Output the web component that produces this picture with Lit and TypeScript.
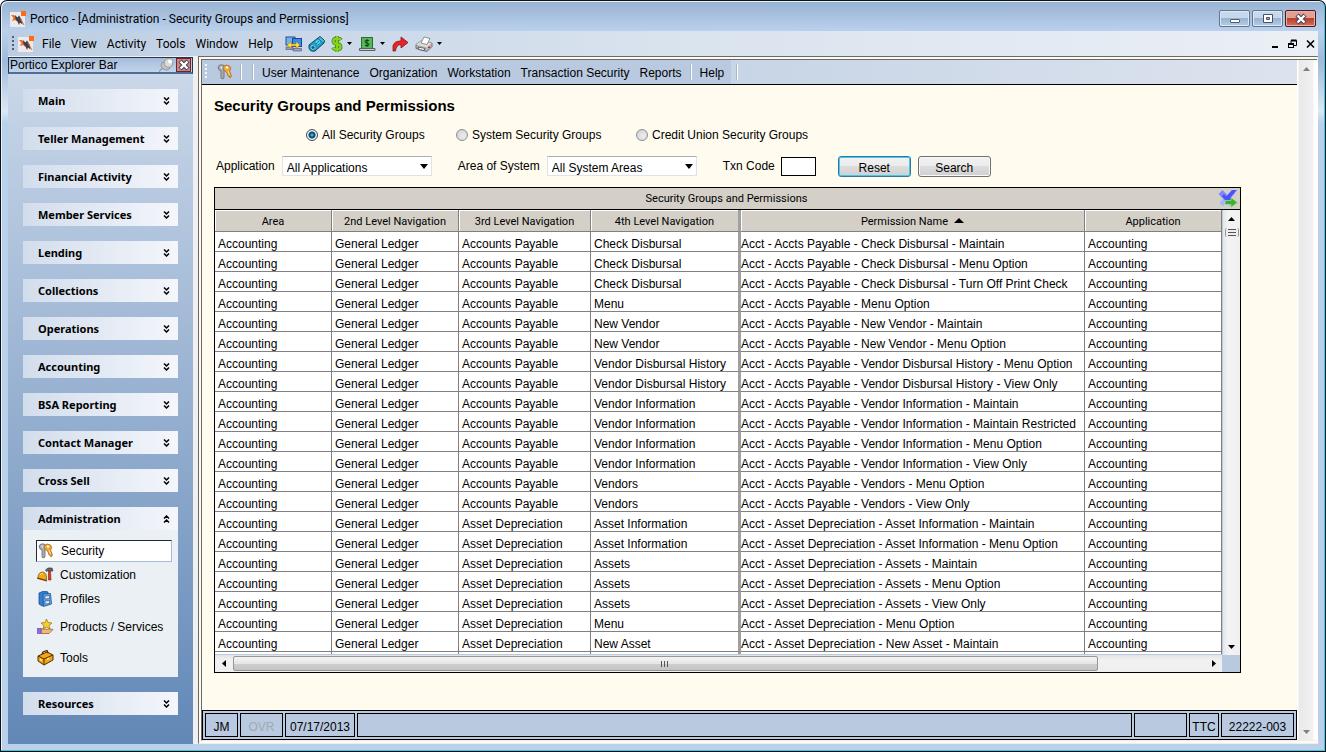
import { LitElement, html, css, svg, nothing } from "lit";
import { customElement, property, state } from "lit/decorators.js";
import { classMap } from "lit/directives/class-map.js";

const box = (w: number, h: number, body: unknown) =>
  html`<svg width=${w} height=${h} viewBox="0 0 ${w} ${h}" aria-hidden="true">${body}</svg>`;

const glyphs: Record<string, unknown> = {
  logo: box(16, 16, svg`
    <rect y="1" width="15" height="15" fill="#eceaec"/>
    <path d="M1 4L4 4L8 8L7.500 11L5 9L2 10L3.500 7Z" fill="#f26a21"/>
    <path d="M5 4L7.500 6.500L9 4.500L12 9L12.500 13.500L10 11.500L9 14L7.500 10.500L5.500 8Z" fill="#3c3f4c"/>
    <path d="M10 7L14 14" stroke="#f26a21"/>
    <rect x="11" y="0" width="5" height="5" fill="#ff6a13"/>`),
  keys: box(17, 16, svg`
    <path d="M1 3Q2 0 6 1L9 3L7 6L7 14L5 15L4 14V7L2 6Z" fill="#a9adb3" stroke="#666a70" stroke-width=".8"/>
    <circle cx="4.500" cy="3.500" r="1" fill="#eee"/>
    <path d="M6 3Q9 -0.500 12.500 2Q15 5 12.500 7L14.500 12L13 14L12 12L11 12L10.500 10L9.500 8Q6 7 6 3Z" fill="#f0a63a" stroke="#a8691c" stroke-width=".8"/>
    <path d="M11 7L12.500 11" stroke="#ffe0a0"/>
    <circle cx="10" cy="3.500" r="1.300" fill="#fff4d8"/>`),
  computers: box(17, 16, svg`
    <rect x="1" y="1" width="9" height="8" fill="#6eb4f5" stroke="#2e4a8c"/>
    <rect x="7.500" y="2.500" width="9" height="8" fill="#2e8ff0" stroke="#2e3f8c"/>
    <path d="M1 11h7v2.500H1zM8 12.500h8.500v2.500H8z" fill="#9a9ec0" stroke="#4a4f80" stroke-width=".6"/>
    <path d="M2 9L6 5.500V8H11V5.500L15 9L11 12.500V10H6V12.500Z" fill="#ffe03a" stroke="#9a7a10" stroke-width=".6"/>`),
  device: box(17, 16, svg`
    <path d="M1 9L10 2L16 7L7 15Q2 16 1 12Z" fill="#1d9cc4" stroke="#0a4a66"/>
    <path d="M10 2L12 0.500L16.500 4.500L16 7" fill="#3cc4e0" stroke="#0a4a66"/>
    <path d="M7 6L10 3.500L13.500 7L10.500 9.500Z" fill="#5fd3ea"/>
    <path d="M8 8L11 5M10 9L13 6.500" stroke="#0c5f86" stroke-width=".8"/>
    <circle cx="5" cy="11.500" r="2" fill="#0c5f86" stroke="#8fe0f0" stroke-width=".8"/>`),
  dollar: box(12, 16, svg`
    <path d="M10 4Q9 2.500 6 2.500Q2.500 2.500 2.500 5Q2.500 7.500 6 8Q9.500 8.500 9.500 11Q9.500 13.500 6 13.500Q3 13.500 2 11.500M6 0V16" fill="none" stroke="#3f7a10" stroke-width="3.800"/>
    <path d="M10 4Q9 2.500 6 2.500Q2.500 2.500 2.500 5Q2.500 7.500 6 8Q9.500 8.500 9.500 11Q9.500 13.500 6 13.500Q3 13.500 2 11.500M6 0V16" fill="none" stroke="#84d321" stroke-width="2.400"/>`),
  cash: box(17, 16, svg`
    <rect x="2.500" y="1.500" width="11" height="11" fill="#54b85a" stroke="#2c6e34"/>
    <path d="M10 4.500H7Q6 4.500 6 6Q6 7 8 7Q10 7 10 8.500Q10 9.500 9 9.500H6M8 3V11" fill="none" stroke="#0d3d14"/>
    <path d="M0.500 12.500H16V14.500H0.500Z" fill="#c9cdd0" stroke="#5a5f64"/>`),
  redo: box(17, 16, svg`<path d="M1 15V10Q2 5 9 5V1L16 6.500L9 12V8.500Q4 8.500 3.500 15Z" fill="#e8232a" stroke="#8a0f14" stroke-width=".8"/>`),
  printer: box(18, 16, svg`
    <path d="M1 8.500L6 5L17 7V10.500L12 15.500L1 12.500Z" fill="#b4b6b8" stroke="#55585a" stroke-width=".8"/>
    <path d="M1 8.500L6 5L17 7L12 11.500Z" fill="#d9dbdc"/>
    <path d="M6 7L9 1L15 2.500L12 8.500Z" fill="#fff" stroke="#777" stroke-width=".8"/>
    <path d="M3 11L10 12.500L9 14.500L4 13.500Z" fill="#fff" stroke="#333" stroke-width=".7"/>
    <rect x="13" y="10.500" width="2" height="1.500" fill="#e02020"/>`),
  drop: box(6, 3, svg`<path d="M0 0H5L2.500 3Z" fill="#000"/>`),
  pin: box(15, 14, svg`
    <path d="M5 9L0 13.500" stroke="#777"/>
    <path d="M2 6Q2 12 9 12L11 10L4 4Z" fill="#c4c4c4" stroke="#888" stroke-width=".8"/>
    <circle cx="9.500" cy="5" r="4.400" fill="#dadada" stroke="#8c8c8c" stroke-width=".8"/>
    <circle cx="11" cy="3.500" r="2" fill="#fff"/>`),
  down: box(7, 8, svg`<path d="M1 0.500L3.500 3L6 0.500M1 4.500L3.500 7L6 4.500" fill="none" stroke="#000" stroke-width="1.500"/>`),
  up: box(7, 8, svg`<path d="M1 3.500L3.500 1L6 3.500M1 7.500L3.500 5L6 7.500" fill="none" stroke="#000" stroke-width="1.500"/>`),
  customization: box(17, 16, svg`
    <path d="M1 11Q1 5 6 5Q10 6 9.500 13L4 12Z" fill="#f5a914" stroke="#8a5608" stroke-width=".8"/>
    <path d="M3 8Q4 6 6 6.500" fill="none" stroke="#ffe28a"/>
    <path d="M0 11L10 14" stroke="#6b4306" stroke-width="1.200"/>
    <path d="M8.500 3L11 1H15L16 4H14L13.500 3.500H11L9.500 4.500Z" fill="#667" stroke="#222" stroke-width=".6"/>
    <path d="M11.500 4H13.500L14 13H11.500Z" fill="#d5401f" stroke="#7a1e0c" stroke-width=".6"/>`),
  profiles: box(17, 16, svg`
    <path d="M2 2L7 0L11 1V13L5 15L2 13Z" fill="#2f7fd8" stroke="#174a90" stroke-width=".8"/>
    <path d="M6 3L13.500 2.500L14.500 13L6.500 15.500Z" fill="#5fa8ee" stroke="#1e4f94" stroke-width=".8"/>
    <path d="M8 5L12.500 4.500V7.500L8 8ZM8 10L12.500 9.500V12.500L8 13Z" fill="#d6e8fa" stroke="#235" stroke-width=".5"/>`),
  products: box(17, 16, svg`
    <path d="M9.500 0L11 3.500L15 4L12 6.500L13 10L9.500 8L6 10L7 6.500L4 4L8 3.500Z" fill="#f6cf2e" stroke="#94700c" stroke-width=".7"/>
    <path d="M4 10H8Q10 11 13 10L16 10.500L12 14.500H4Z" fill="#f3b877" stroke="#8a5420" stroke-width=".7"/>
    <rect x="0.500" y="9.500" width="3.500" height="5" fill="#8f6ee0" stroke="#5a3fb0" stroke-width=".6"/>`),
  tools: box(17, 16, svg`
    <path d="M1 6L10 2L16 5V10L7 15L1 11Z" fill="#f3a712" stroke="#4c2e02"/>
    <path d="M1 6L7 9L16 5M7 9V15" fill="none" stroke="#4c2e02"/>
    <path d="M5 4L6 2L10 0.500L11 3" fill="none" stroke="#4c2e02" stroke-width="1.300"/>
    <path d="M3 8.500L5 9.500V11L3 10ZM10 8.500L12 7.500V9L10 10Z" fill="#fff0a8"/>`),
  exportX: box(20, 19, svg`
    <path d="M3 15.500L15.500 3" stroke="#a9b2fb" stroke-width="5"/>
    <path d="M2.500 3L14 15" stroke="#7f89fb" stroke-width="5.500"/>
    <path d="M7 9L14 1H19L13 8L16 13L10 13Z" fill="#4a52ff"/>
    <path d="M5 6L11 13" stroke="#4a52ff" stroke-width="3"/>
    <path d="M7 11.500H13V8.500L19.500 13.500L13 18.500V15.500H7Z" fill="#36b52a" stroke="#b8dca8" stroke-width=".7"/>`),
  sort: box(10, 5, svg`<path d="M0 5L5 0L10 5Z" fill="#000"/>`),
  arrowUp: box(7, 4, svg`<path d="M0 4L3.500 0L7 4Z"/>`),
  arrowDown: box(7, 4, svg`<path d="M0 0L3.500 4L7 0Z"/>`),
  arrowLeft: box(4, 7, svg`<path d="M4 0L0 3.500L4 7Z"/>`),
  arrowRight: box(4, 7, svg`<path d="M0 0L4 3.500L0 7Z"/>`),
  combo: box(8, 5, svg`<path d="M0 0H8L4 5Z"/>`),
  wmin: box(12, 12, svg`<rect x="1.500" y="6.500" width="9" height="3" rx=".5" fill="#fff" stroke="#555c70"/>`),
  wmax: box(12, 12, svg`<path d="M1.500 1.500H10.500V9.500H1.500ZM4.500 4.500V6.500H7.500V4.500Z" fill="#fff" fill-rule="evenodd" stroke="#4a5066"/>`),
  wclose: box(12, 12, svg`<path d="M2 2L10 10M10 2L2 10" stroke="#4b4356" stroke-width="4.500"/><path d="M2.500 2.500L9.500 9.500M9.500 2.500L2.500 9.500" stroke="#fff" stroke-width="2.400"/>`),
  mmin: box(8, 10, svg`<rect x="1" y="7" width="6" height="2"/>`),
  mrestore: box(9, 10, svg`<path d="M3 4V1.500H8.500V6.500H6" fill="none" stroke="#000"/><path d="M3 1.500H8.500M0.500 5H6" stroke="#000" stroke-width="2"/><rect x=".5" y="4.500" width="5" height="4" fill="none" stroke="#000"/>`),
  mclose: box(9, 10, svg`<path d="M1 1.500L8 8.500M8 1.500L1 8.500" stroke="#000" stroke-width="1.600"/>`),
};

const V = "Vendor Information", D = "Vendor Disbursal History", P = "Accounts Payable", A = "Asset Depreciation";
const permissions: [string, string, string][] = [
  [P, "Check Disbursal", "Check Disbursal - Maintain"],
  [P, "Check Disbursal", "Check Disbursal - Menu Option"],
  [P, "Check Disbursal", "Check Disbursal - Turn Off Print Check"],
  [P, "Menu", "Menu Option"],
  [P, "New Vendor", "New Vendor - Maintain"],
  [P, "New Vendor", "New Vendor - Menu Option"],
  [P, D, "Vendor Disbursal History - Menu Option"],
  [P, D, "Vendor Disbursal History - View Only"],
  [P, V, "Vendor Information - Maintain"],
  [P, V, "Vendor Information - Maintain Restricted"],
  [P, V, "Vendor Information - Menu Option"],
  [P, V, "Vendor Information - View Only"],
  [P, "Vendors", "Vendors - Menu Option"],
  [P, "Vendors", "Vendors - View Only"],
  [A, "Asset Information", "Asset Information - Maintain"],
  [A, "Asset Information", "Asset Information - Menu Option"],
  [A, "Assets", "Assets - Maintain"],
  [A, "Assets", "Assets - Menu Option"],
  [A, "Assets", "Assets - View Only"],
  [A, "Menu", "Menu Option"],
  [A, "New Asset", "New Asset - Maintain"],
];

const common = css`
  :host, *, *::before, *::after { box-sizing: border-box; }
  svg { display: block; flex: none; }
  button {
    margin: 0; padding: 0; border: 0; background: none; font: inherit; color: inherit;
    display: flex; align-items: center; justify-content: center; white-space: nowrap;
  }
`;

@customElement("explorer-bar")
export class ExplorerBar extends LitElement {
  @state() private open = "Administration";
  private groups = ["Main", "Teller Management", "Financial Activity", "Member Services", "Lending", "Collections",
    "Operations", "Accounting", "BSA Reporting", "Contact Manager", "Cross Sell", "Administration", "Resources"];
  private links = [["Security", "keys"], ["Customization", "customization"], ["Profiles", "profiles"],
    ["Products / Services", "products"], ["Tools", "tools"]];

  static styles = [common, css`
    :host { display: flex; flex-direction: column; background: linear-gradient(#ccd9ea, #6288b7); }
    .title {
      display: flex; align-items: center; height: 17px; padding: 0 1px; gap: 2px;
      border: 1px solid #26364d; border-bottom: 2px solid #4d6e99; background: linear-gradient(#a3bcdb, #c4d4e9);
      font: 12px/14px "Liberation Sans", sans-serif;
    }
    .title span { flex: 1; white-space: nowrap; }
    .x { width: 15px; height: 14px; border: 1px solid #762028; background: #c78884; }
    nav { display: flex; flex-direction: column; gap: 15px; padding: 15px; }
    .head {
      width: 100%; height: 23px; padding: 0 8px 0 15px; justify-content: space-between;
      background: linear-gradient(90deg, #d2ddec, #f4f6fb);
      font: bold 11px/14px "Noto Sans", sans-serif; color: #000;
    }
    ul {
      display: flex; flex-direction: column; gap: 2px; list-style: none; margin: 0;
      padding: 10px 6px 5px 13px; background: #ebf0f4;
    }
    a {
      display: flex; align-items: center; gap: 6px; height: 22px; padding-left: 1px;
      color: #000; text-decoration: none; white-space: nowrap; font: 12px/14px "Liberation Sans", sans-serif;
    }
    a.tall { height: 29px; }
    a.current { border: 1px solid #1d2c42; border-right-color: #a6bcd6; border-bottom-color: #a6bcd6; background: #fff; }
  `];

  render() {
    return html`
      <div class="title"><span>Portico Explorer Bar</span>${glyphs.pin}
        <button class="x" aria-label="Close explorer bar">${glyphs.wclose}</button></div>
      <nav>${this.groups.map((g) => {
        const open = g === this.open;
        return html`<section>
          <button class="head" aria-expanded=${open} @click=${() => (this.open = open ? "" : g)}>
            ${g}${open ? glyphs.up : glyphs.down}</button>
          ${open && g === "Administration" ? html`<ul>${this.links.map(([label, icon], i) => html`
            <li><a href="#" class=${classMap({ current: i === 0, tall: i > 2 })}>${glyphs[icon]}${label}</a></li>`)}</ul>` : nothing}
        </section>`;
      })}</nav>`;
  }
}

@customElement("permission-grid")
export class PermissionGrid extends LitElement {
  @property({ attribute: false }) rows = permissions;

  static styles = [common, css`
    :host {
      display: grid; grid-template: 21px minmax(0, 1fr) 17px / minmax(0, 1fr) 18px;
      border: 1px solid #000; background: #b8c9e0; font: 12px/14px "Liberation Sans", sans-serif;
    }
    .caption {
      grid-column: 1 / -1; display: grid; grid-template-columns: 1fr auto 1fr; align-items: center;
      background: #d4d0c8; font: 11px/14px Roboto, sans-serif; padding-right: 2px;
    }
    .caption h2 { grid-column: 2; margin: 0; font: inherit; }
    .caption button { justify-self: end; }
    .view { overflow: hidden; background: #fff; border-top: 1px solid #000; margin-bottom: 1px; }
    table { width: 100%; min-width: 1007px; table-layout: fixed; border-collapse: separate; border-spacing: 0; }
    .area { width: 117px; } .second { width: 127px; } .third { width: 132px; }
    .fourth { width: 150px; } .name { width: 344px; }
    th {
      height: 22px; padding: 2px 0 0; font: 11px/14px Roboto, sans-serif; background: #d4d0c8;
      border: 1px solid #808080; border-width: 0 1px 1px 0; box-shadow: inset 1px 1px #fff;
    }
    th svg { display: inline-block; margin-left: 6px; vertical-align: 2px; }
    td {
      height: 20px; padding: 5px 0 0 3px; white-space: nowrap;
      border: 1px solid #808080; border-width: 0 1px 1px 0;
    }
    th:nth-child(4), td:nth-child(4) { border-right: 3px solid #a0a0a0; }
    td:nth-child(5) { padding-left: 0; }
    .vbar {
      display: flex; flex-direction: column; align-items: center; padding: 7px 0 6px;
      border-top: 1px solid #000; background: linear-gradient(90deg, #b8c9e0 1px, #e6e6e6 1px, #f3f3f3 6px, #f0f0f0);
    }
    .vthumb {
      width: 14px; height: 9px; margin: 7px 0 auto 2px; border: 1px solid #979797; border-width: 0 1px; border-radius: 2px;
      background: repeating-linear-gradient(#555 0 1px, transparent 1px 3px) 50% 1px / 8px 8px no-repeat, #eee;
    }
    .hbar { display: flex; align-items: center; padding: 0 6px 0 7px; background: linear-gradient(#e4e4e4, #f1f1f1 5px, #efefef); }
    .hthumb {
      width: 87%; height: 15px; margin: 0 auto 0 7px; border: 1px solid #979797; border-radius: 2px;
      background: repeating-linear-gradient(90deg, #555 0 1px, transparent 1px 3px) 50% 50% / 8px 6px no-repeat,
        linear-gradient(#f4f4f4, #e6e6e6 50%, #cfcfcf 50%, #c4c4c4);
    }
  `];

  render() {
    return html`
      <div class="caption"><h2 id="t">Security Groups and Permissions</h2>
        <button aria-label="Export">${glyphs.exportX}</button></div>
      <div class="view"><table aria-labelledby="t">
        <thead><tr><th class="area">Area</th><th class="second">2nd Level Navigation</th>
          <th class="third">3rd Level Navigation</th><th class="fourth">4th Level Navigation</th>
          <th class="name" aria-sort="ascending">Permission Name${glyphs.sort}</th><th>Application</th></tr></thead>
        <tbody>${this.rows.map(([third, fourth, name]) => html`<tr>
          <td>Accounting</td><td>General Ledger</td><td>${third}</td><td>${fourth}</td>
          <td>Acct - ${third === P ? "Accts Payable" : third} - ${name}</td><td>Accounting</td></tr>`)}
          <tr><td></td><td></td><td></td><td></td><td></td><td></td></tr>
        </tbody></table></div>
      <div class="vbar">${glyphs.arrowUp}<div class="vthumb"></div>${glyphs.arrowDown}</div>
      <div class="hbar">${glyphs.arrowLeft}<div class="hthumb"></div>${glyphs.arrowRight}</div>`;
  }
}

@customElement("app-root")
export class AppRoot extends LitElement {
  @state() private scope = 0;

  static styles = [common, css`
    :host {
      display: flex; flex-direction: column; height: 100vh; overflow: hidden;
      border: 1px solid #10141c; border-bottom-color: #000; border-radius: 7px 7px 0 0;
      padding: 0 7px 7px; color: #000; font: 12px/14px "Liberation Sans", sans-serif;
      background: linear-gradient(#98b2d2, #b9d1ec 30px, #9fbadb 60px, #dbe8f5 110px, #b9d1ea 122px);
      box-shadow: inset -1px -1px #2cd2e8, inset 1px 1px #e8f2fb;
    }
    .titlebar { display: flex; align-items: center; height: 30px; padding: 5px 2px 0 2px; gap: 4px; font: 12px/16px Roboto, sans-serif; }
    .titlebar h1 { flex: 1; margin: 0; font: inherit; }
    .controls { display: flex; gap: 2px; }
    .controls button {
      width: 31px; height: 17px; border: 1px solid #5f7590; border-radius: 2px; box-shadow: inset 0 0 0 1px #dbe8f6;
      background: linear-gradient(#c5d8ec 50%, #98b4d2 50%, #b5cde6);
    }
    .controls .close { border-color: #431a20; box-shadow: inset 0 0 0 1px #e9b1a6; background: linear-gradient(#e0a095 50%, #b8402a 50%, #d2715c); }
    .menubar {
      display: flex; align-items: center; height: 25px; padding: 0 3px 0 4px;
      background: linear-gradient(90deg, #bccde3, #d9e3ee 50%, #ebeff6); font: 12px/16px Roboto, sans-serif;
    }
    .grip { width: 2px; height: 16px; margin-right: 4px; background: repeating-linear-gradient(#4c5f80 0 2px, transparent 2px 4px); }
    .grip.light { margin-right: 10px; background: repeating-linear-gradient(#f4f6fa 0 2px, transparent 2px 4px); }
    .menus { display: flex; gap: 10px; padding: 2px 0 0 8px; }
    .menubar .menus { margin-right: 12px; padding: 0 0 0 8px; }
    .icons { display: flex; align-items: center; gap: 6px; flex: 1; }
    .pair { gap: 4px; }
    .mdi { display: flex; gap: 9px; }
    .body { display: grid; grid-template-columns: 185px minmax(0, 1fr); column-gap: 5px; flex: 1; min-height: 0; background: #f0f0f0; }
    explorer-bar { margin-top: 1px; }
    .panel {
      display: grid; grid-template-columns: minmax(0, 1fr) 20px; min-height: 0; background: #fffbef;
      border: 1px solid #fff; border-top: 4px double #696969; border-left: 4px double #696969; border-bottom: 4px double #eee;
    }
    .content { display: flex; flex-direction: column; min-height: 0; }
    .toolbar { display: flex; align-items: center; height: 25px; padding-left: 3px; border-bottom: 1px solid #000; background: linear-gradient(90deg, #b8c9e0 529px, #c7d5e6 529px, #dde3ee); }
    .sep { width: 2px; height: 16px; border-left: 1px solid #a9b4c6; border-right: 1px solid #fff; }
    .toolbar > .first { margin: 0 10px 0 6px; }
    .toolbar > .before-help { margin-left: 8px; }
    .toolbar > .last { margin-left: 12px; }
    .page { display: flex; flex-direction: column; flex: 1; min-height: 0; padding: 12px 56px 37px 12px; }
    .page h2 { margin: 0; font: bold 15px/18px "Liberation Sans", sans-serif; }
    fieldset { display: grid; grid-template-columns: 150px 180px auto; margin: 13px 0 0; padding: 0 0 0 92px; border: 0; height: 14px; }
    .radio { display: flex; align-items: center; gap: 4px; white-space: nowrap; }
    .radio input {
      appearance: none; width: 12px; height: 12px; margin: 0; border: 1px solid #8c8f94; border-radius: 50%;
      background: radial-gradient(circle at 60% 60%, #eee, #c8ccd0);
    }
    .radio input:checked { border-color: #3f4d5c; background: radial-gradient(circle, #3fb4d8 0 1px, #124a72 2px 3px, #e8eef3 4px); }
    form { display: flex; align-items: center; height: 22px; margin: 13px 0 10px; white-space: nowrap; }
    form label { padding-left: 2px; }
    .combo { display: grid; align-items: center; margin: 0 24px 0 7px; }
    .combo > * { grid-area: 1 / 1; }
    .combo svg { justify-self: end; margin-right: 4px; pointer-events: none; }
    .combo select {
      appearance: none; width: 150px; height: 20px; padding: 4px 16px 0 4px; border: 1px solid #e0e2ea;
      border-top-color: #abadb3; border-radius: 0; background: #fff; font: inherit; color: #000;
    }
    .code { width: 35px; height: 19px; margin: 0 22px 0 6px; padding: 0 2px; border: 1px solid #000; background: #fff; font: inherit; }
    form button {
      width: 73px; height: 21px; padding-top: 3px; margin-right: 7px; border: 1px solid #707070; border-radius: 3px;
      background: linear-gradient(#f2f2f2, #ebebeb 50%, #dddddd 50%, #cfcfcf); box-shadow: inset 0 0 0 1px #f8f8f8;
    }
    form .default { border-color: #2c7a9e; box-shadow: inset 0 0 0 1px #48c8f0; }
    permission-grid { flex: 1; min-height: 0; }
    .status { display: flex; gap: 2px; height: 30px; padding: 2px; border: 1px solid #000; background: #b8c9e0; }
    .status div { display: flex; align-items: center; justify-content: center; border: 1px solid #000; width: 33px; padding-top: 3px; }
    .status .ovr { width: 43px; color: #a3a9b3; }
    .status .date { width: 70px; }
    .status .message { flex: 1; }
    .status .task { width: 53px; }
    .status .ttc { width: 30px; }
    .status .id { width: 73px; }
    .scroll { display: flex; flex-direction: column; justify-content: space-between; align-items: center; padding: 7px 1px 6px 0; background: linear-gradient(90deg, #fff 1px, #e9e9e9 2px, #f1f1f1 16px, #fff 17px); fill: #808080; }
  `];

  private icon(name: string, label: string, menu = false) {
    return html`<button class=${classMap({ pair: menu })} aria-label=${label}>${glyphs[name]}${menu ? glyphs.drop : nothing}</button>`;
  }

  render() {
    return html`
      <header class="titlebar">${glyphs.logo}<h1>Portico - [Administration - Security Groups and Permissions]</h1>
        <div class="controls"><button aria-label="Minimize">${glyphs.wmin}</button><button aria-label="Maximize">${glyphs.wmax}</button>
          <button class="close" aria-label="Close">${glyphs.wclose}</button></div></header>
      <div class="menubar"><span class="grip"></span>${glyphs.logo}
        <div class="menus">${["File", "View", "Activity", "Tools", "Window", "Help"].map((m) => html`<button>${m}</button>`)}</div>
        <div class="icons">${this.icon("computers", "Connect")}${this.icon("device", "Device")}${this.icon("dollar", "Money", true)}
          ${this.icon("cash", "Cash", true)}${this.icon("redo", "Go")}${this.icon("printer", "Print", true)}</div>
        <div class="mdi">${this.icon("mmin", "Minimize document")}${this.icon("mrestore", "Restore document")}${this.icon("mclose", "Close document")}</div>
      </div>
      <div class="body">
        <explorer-bar></explorer-bar>
        <main class="panel">
          <div class="content">
            <div class="toolbar"><span class="grip light"></span>${this.icon("keys", "Security")}
              <span class="sep first"></span><span class="sep"></span>
              <div class="menus">${["User Maintenance", "Organization", "Workstation", "Transaction Security", "Reports"].map((m) => html`<button>${m}</button>`)}</div>
              <span class="sep before-help"></span><div class="menus"><button>Help</button></div><span class="sep last"></span></div>
            <div class="page">
              <h2>Security Groups and Permissions</h2>
              <fieldset aria-label="Security groups">${["All Security Groups", "System Security Groups", "Credit Union Security Groups"].map((g, i) => html`
                <label class="radio"><input type="radio" name="scope" .checked=${this.scope === i} @change=${() => (this.scope = i)}>${g}</label>`)}</fieldset>
              <form @submit=${(e: Event) => e.preventDefault()}>
                <label for="application">Application</label>
                <div class="combo"><select id="application"><option>All Applications</option></select>${glyphs.combo}</div>
                <label for="area">Area of System</label>
                <div class="combo"><select id="area"><option>All System Areas</option></select>${glyphs.combo}</div>
                <label for="code">Txn Code</label><input class="code" id="code">
                <button type="reset" class="default">Reset</button><button type="submit">Search</button>
              </form>
              <permission-grid></permission-grid>
            </div>
            <footer class="status"><div>JM</div><div class="ovr">OVR</div><div class="date">07/17/2013</div>
              <div class="message"></div><div class="task"></div><div class="ttc">TTC</div><div class="id">22222-003</div></footer>
          </div>
          <div class="scroll">${glyphs.arrowUp}${glyphs.arrowDown}</div>
        </main>
      </div>`;
  }
}
